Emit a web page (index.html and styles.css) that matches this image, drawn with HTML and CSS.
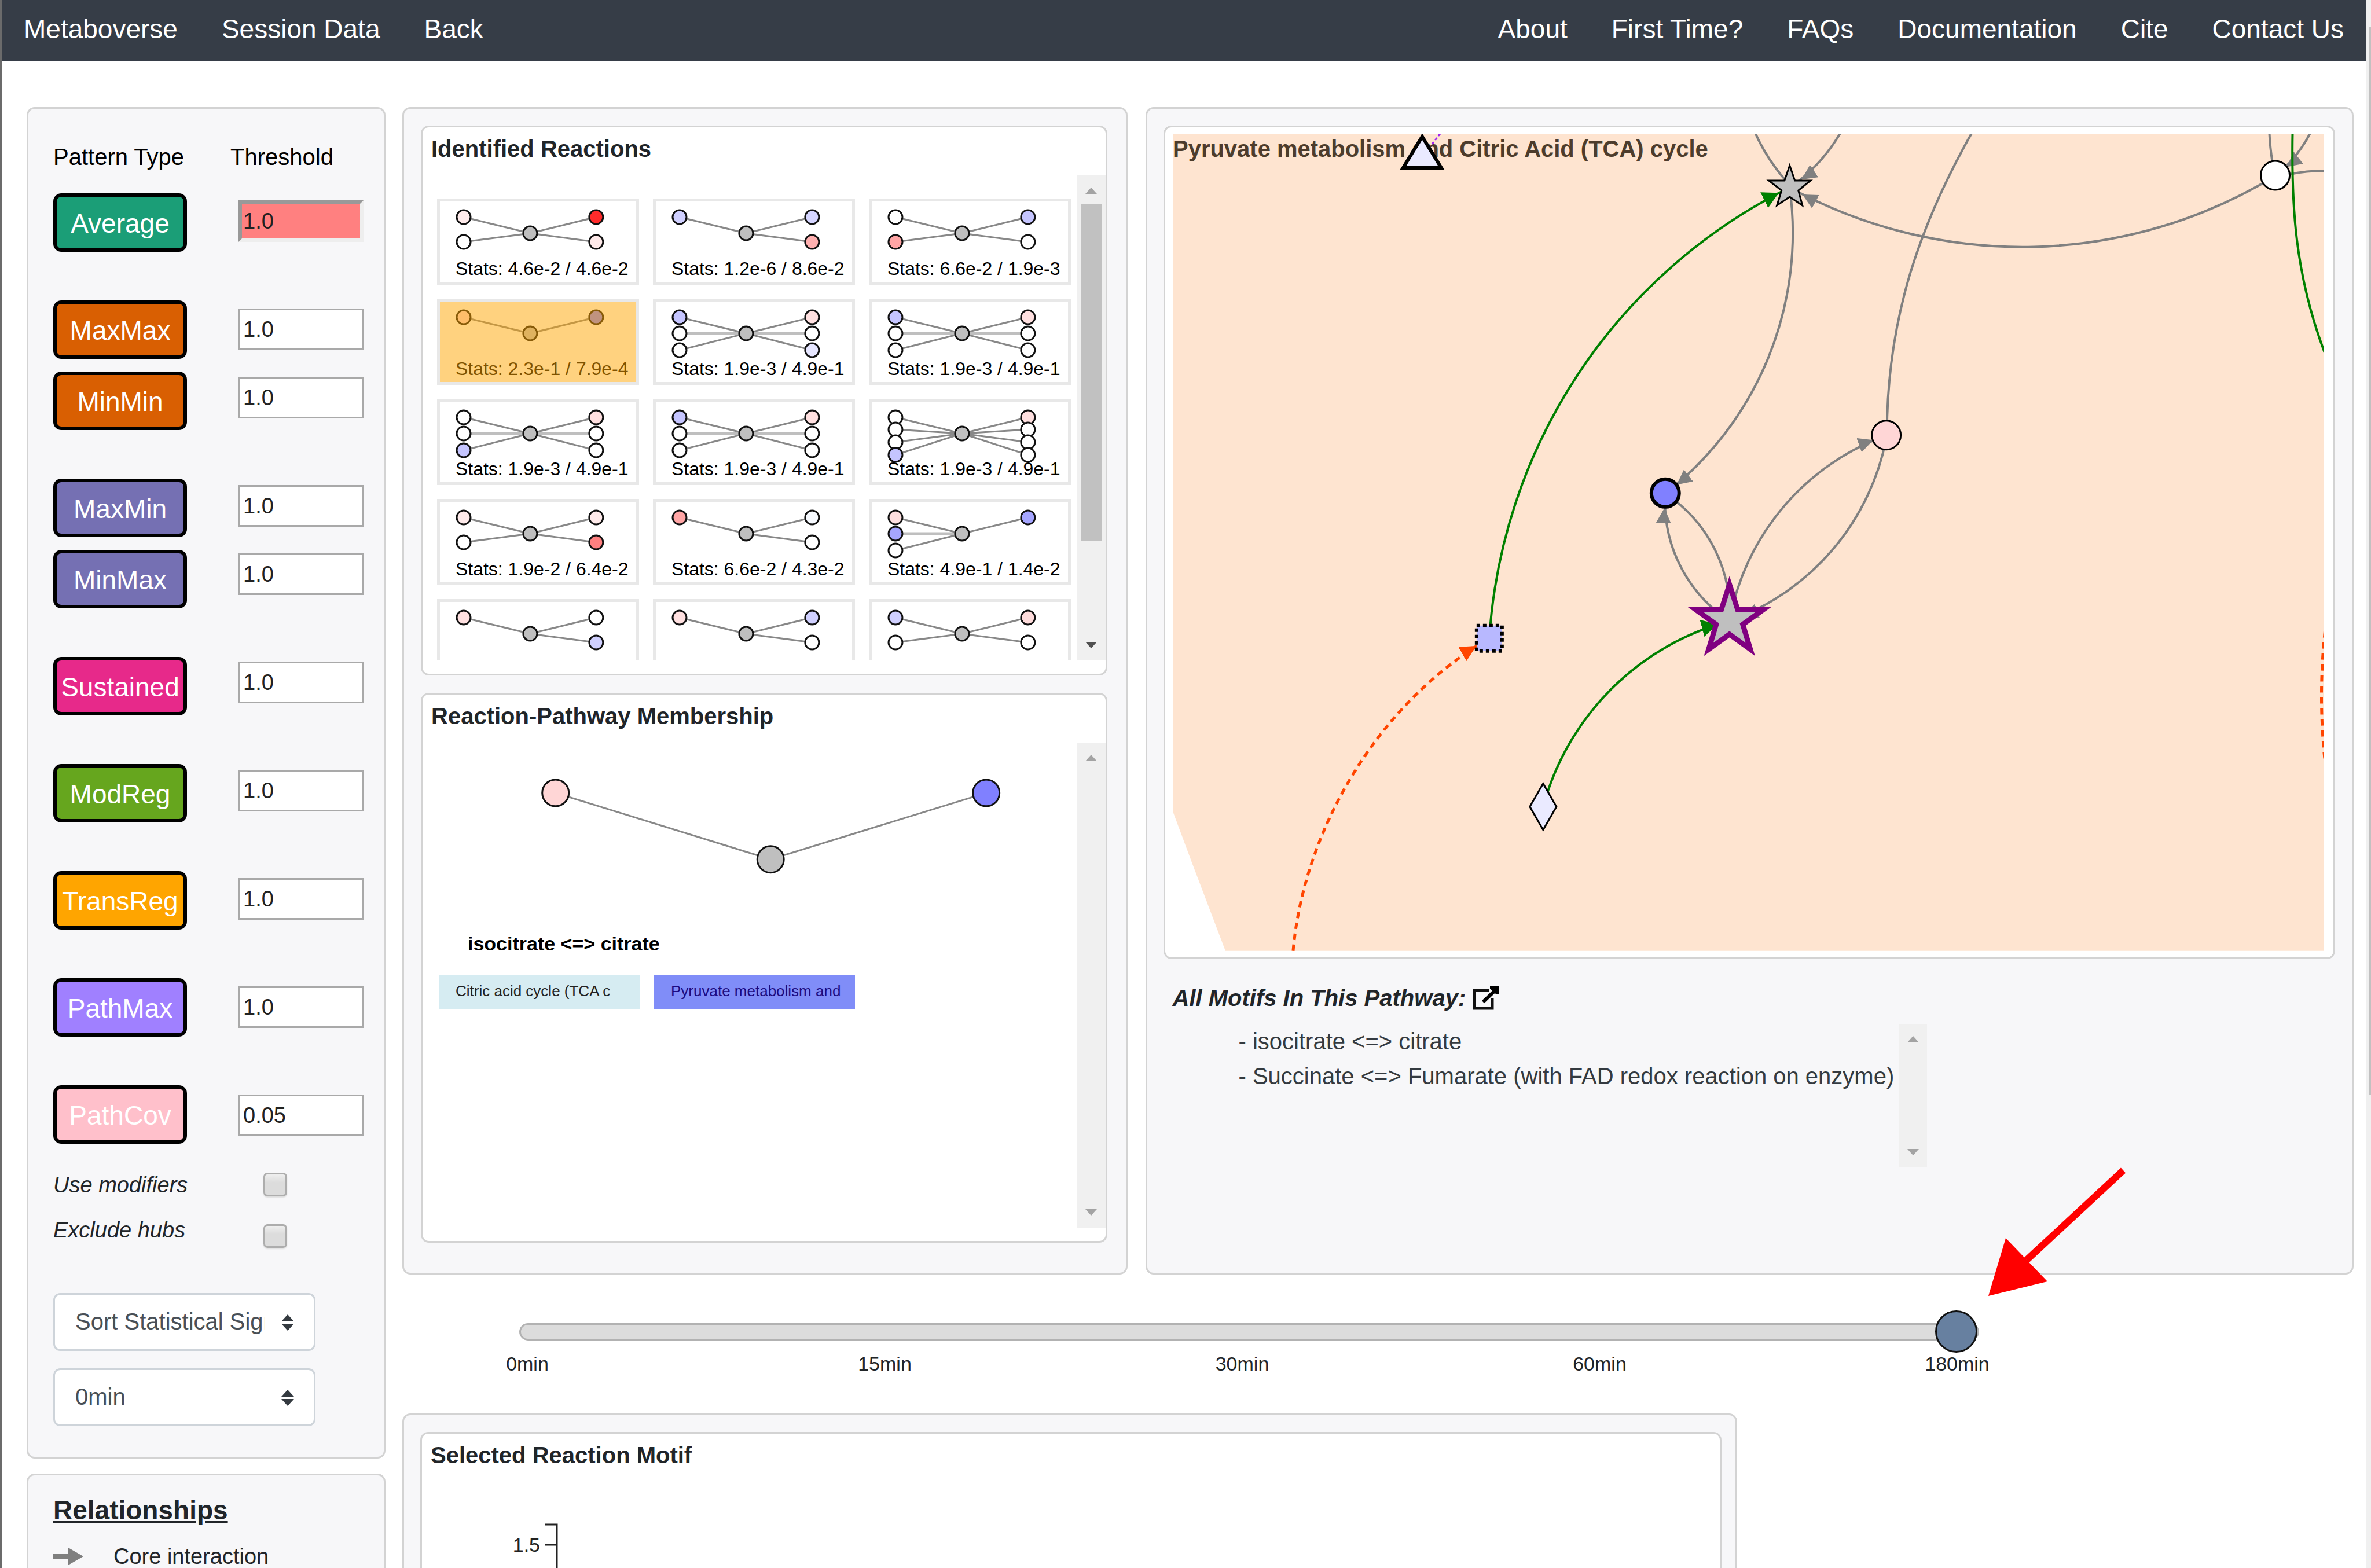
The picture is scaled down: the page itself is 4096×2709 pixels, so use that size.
FILE: index.html
```html
<!DOCTYPE html>
<html lang="en">
<head>
<meta charset="utf-8">
<title>Metaboverse</title>
<link rel="stylesheet" href="styles.css">
</head>
<body>
<svg class="defs" width="0" height="0" aria-hidden="true">
  <defs>
    <circle id="n" r="12" stroke="#111" stroke-width="3"/>
    <path id="l1" fill="none" d="M46 32L161 60"/>
    <path id="l2" fill="none" d="M46 32L161 60M46 75L161 60"/>
    <path id="l3" fill="none" d="M46 32L161 60L46 89"/>
    <path id="l4" fill="none" d="M46 32L161 60L46 53M46 75L161 60L46 97"/>
    <path id="r1" fill="none" d="M275 32L161 60"/>
    <path id="r2" fill="none" d="M275 32L161 60L275 75"/>
    <path id="r3" fill="none" d="M275 32L161 60L275 89"/>
    <path id="r4" fill="none" d="M275 32L161 60L275 53M275 75L161 60L275 97"/>
  </defs>
</svg>

<div class="page">
  <header class="topbar">
    <nav class="nav"><a href="#">Metaboverse</a><a href="#">Session Data</a><a href="#">Back</a></nav>
    <nav class="nav"><a href="#">About</a><a href="#">First Time?</a><a href="#">FAQs</a><a href="#">Documentation</a><a href="#">Cite</a><a href="#">Contact Us</a></nav>
  </header>

  <div class="layout">
    <aside class="sidebar">
      <section class="panel controls">
        <div class="columns">
          <div class="patterns">
            <span class="col-title">Pattern Type</span>
            <div class="group"><button class="pattern average">Average</button></div>
            <div class="group"><button class="pattern extreme">MaxMax</button><button class="pattern extreme">MinMin</button></div>
            <div class="group"><button class="pattern mixed">MaxMin</button><button class="pattern mixed">MinMax</button></div>
            <div class="group"><button class="pattern sustained">Sustained</button></div>
            <div class="group"><button class="pattern modreg">ModReg</button></div>
            <div class="group"><button class="pattern transreg">TransReg</button></div>
            <div class="group"><button class="pattern pathmax">PathMax</button></div>
            <div class="group"><button class="pattern pathcov">PathCov</button></div>
            <div class="check-labels">
              <label for="modifiers">Use modifiers</label>
              <label for="hubs">Exclude hubs</label>
            </div>
          </div>
          <div class="thresholds">
            <span class="col-title">Threshold</span>
            <div class="group"><input class="value active" type="text" aria-label="Average threshold" value="1.0"></div>
            <div class="group"><input class="value" type="text" aria-label="MaxMax threshold" value="1.0"><input class="value" type="text" aria-label="MinMin threshold" value="1.0"></div>
            <div class="group"><input class="value" type="text" aria-label="MaxMin threshold" value="1.0"><input class="value" type="text" aria-label="MinMax threshold" value="1.0"></div>
            <div class="group"><input class="value" type="text" aria-label="Sustained threshold" value="1.0"></div>
            <div class="group"><input class="value" type="text" aria-label="ModReg threshold" value="1.0"></div>
            <div class="group"><input class="value" type="text" aria-label="TransReg threshold" value="1.0"></div>
            <div class="group"><input class="value" type="text" aria-label="PathMax threshold" value="1.0"></div>
            <div class="group"><input class="value" type="text" aria-label="PathCov threshold" value="0.05"></div>
            <div class="checks">
              <input type="checkbox" id="modifiers">
              <input type="checkbox" id="hubs">
            </div>
          </div>
        </div>
        <div class="selects">
          <div class="select">
            <select aria-label="Sort order"><option>Sort Statistical Significance</option></select>
            <svg class="caret" viewBox="0 0 22 28" aria-hidden="true"><path d="M11 0L22 12H0zM11 28L0 16H22z"/></svg>
          </div>
          <div class="select">
            <select aria-label="Time point"><option>0min</option></select>
            <svg class="caret" viewBox="0 0 22 28" aria-hidden="true"><path d="M11 0L22 12H0zM11 28L0 16H22z"/></svg>
          </div>
        </div>
      </section>
      <section class="panel legend">
        <h2>Relationships</h2>
        <div class="legend-row">
          <svg class="legend-arrow" viewBox="0 0 52 30" aria-hidden="true"><path d="M0 11H26V0L52 15L26 30V19H0z"/></svg>
          <span>Core interaction</span>
        </div>
      </section>
    </aside>

    <main class="main">
      <div class="top">
        <section class="panel reactions">
          <div class="card">
            <h3>Identified Reactions</h3>
            <div class="scroller">
              <div class="tiles">
                <svg class="tile" viewBox="0 0 349 149"><use href="#l2"/><use href="#r2"/><use href="#n" x="161" y="60" class="hub"/><use href="#n" x="46" y="32" fill="#ffebeb"/><use href="#n" x="46" y="75" fill="#fff"/><use href="#n" x="275" y="32" fill="#ff2b2b"/><use href="#n" x="275" y="75" fill="#ffeaea"/><text x="32" y="132">Stats: 4.6e-2 / 4.6e-2</text></svg>
                <svg class="tile" viewBox="0 0 349 149"><use href="#l1"/><use href="#r2"/><use href="#n" x="161" y="60" class="hub"/><use href="#n" x="46" y="32" fill="#d0d0ff"/><use href="#n" x="275" y="32" fill="#d5d5ff"/><use href="#n" x="275" y="75" fill="#ffb0b0"/><text x="32" y="132">Stats: 1.2e-6 / 8.6e-2</text></svg>
                <svg class="tile" viewBox="0 0 349 149"><use href="#l2"/><use href="#r2"/><use href="#n" x="161" y="60" class="hub"/><use href="#n" x="46" y="32" fill="#fff"/><use href="#n" x="46" y="75" fill="#ffa5a5"/><use href="#n" x="275" y="32" fill="#c5c5ff"/><use href="#n" x="275" y="75" fill="#fff"/><text x="32" y="132">Stats: 6.6e-2 / 1.9e-3</text></svg>

                <svg class="tile" viewBox="0 0 349 149"><use href="#l1"/><use href="#r1"/><use href="#n" x="161" y="60" class="hub"/><use href="#n" x="46" y="32" fill="#ffd6d6"/><use href="#n" x="275" y="32" fill="#8080ff"/><text x="32" y="132">Stats: 2.3e-1 / 7.9e-4</text><rect class="chosen" x="3" y="3" width="344" height="144"/></svg>
                <svg class="tile" viewBox="0 0 349 149"><path class="mid" d="M46 60H275"/><use href="#l3"/><use href="#r3"/><use href="#n" x="161" y="60" class="hub"/><use href="#n" x="46" y="32" fill="#c5c5ff"/><use href="#n" x="46" y="60" fill="#fff"/><use href="#n" x="46" y="89" fill="#fff"/><use href="#n" x="275" y="32" fill="#ffe0e0"/><use href="#n" x="275" y="60" fill="#fff"/><use href="#n" x="275" y="89" fill="#e6e6ff"/><text x="32" y="132">Stats: 1.9e-3 / 4.9e-1</text></svg>
                <svg class="tile" viewBox="0 0 349 149"><path class="mid" d="M46 60H275"/><use href="#l3"/><use href="#r3"/><use href="#n" x="161" y="60" class="hub"/><use href="#n" x="46" y="32" fill="#c5c5ff"/><use href="#n" x="46" y="60" fill="#fff"/><use href="#n" x="46" y="89" fill="#fff"/><use href="#n" x="275" y="32" fill="#ffe0e0"/><use href="#n" x="275" y="60" fill="#fff"/><use href="#n" x="275" y="89" fill="#fff"/><text x="32" y="132">Stats: 1.9e-3 / 4.9e-1</text></svg>

                <svg class="tile" viewBox="0 0 349 149"><path class="mid" d="M46 60H275"/><use href="#l3"/><use href="#r3"/><use href="#n" x="161" y="60" class="hub"/><use href="#n" x="46" y="32" fill="#fff"/><use href="#n" x="46" y="60" fill="#fff"/><use href="#n" x="46" y="89" fill="#c5c5ff"/><use href="#n" x="275" y="32" fill="#ffe0e0"/><use href="#n" x="275" y="60" fill="#fff"/><use href="#n" x="275" y="89" fill="#fff"/><text x="32" y="132">Stats: 1.9e-3 / 4.9e-1</text></svg>
                <svg class="tile" viewBox="0 0 349 149"><path class="mid" d="M46 60H275"/><use href="#l3"/><use href="#r3"/><use href="#n" x="161" y="60" class="hub"/><use href="#n" x="46" y="32" fill="#c5c5ff"/><use href="#n" x="46" y="60" fill="#fff"/><use href="#n" x="46" y="89" fill="#fff"/><use href="#n" x="275" y="32" fill="#ffe0e0"/><use href="#n" x="275" y="60" fill="#fff"/><use href="#n" x="275" y="89" fill="#fff"/><text x="32" y="132">Stats: 1.9e-3 / 4.9e-1</text></svg>
                <svg class="tile" viewBox="0 0 349 149"><use href="#l4"/><use href="#r4"/><use href="#n" x="161" y="60" class="hub"/><use href="#n" x="46" y="32" fill="#fff"/><use href="#n" x="46" y="53" fill="#fff"/><use href="#n" x="46" y="75" fill="#fff"/><use href="#n" x="46" y="97" fill="#c5c5ff"/><use href="#n" x="275" y="32" fill="#ffe0e0"/><use href="#n" x="275" y="53" fill="#fff"/><use href="#n" x="275" y="75" fill="#fff"/><use href="#n" x="275" y="97" fill="#fff"/><text x="32" y="132">Stats: 1.9e-3 / 4.9e-1</text></svg>

                <svg class="tile" viewBox="0 0 349 149"><use href="#l2"/><use href="#r2"/><use href="#n" x="161" y="60" class="hub"/><use href="#n" x="46" y="32" fill="#ffebeb"/><use href="#n" x="46" y="75" fill="#fff"/><use href="#n" x="275" y="32" fill="#ffebeb"/><use href="#n" x="275" y="75" fill="#ff8080"/><text x="32" y="132">Stats: 1.9e-2 / 6.4e-2</text></svg>
                <svg class="tile" viewBox="0 0 349 149"><use href="#l1"/><use href="#r2"/><use href="#n" x="161" y="60" class="hub"/><use href="#n" x="46" y="32" fill="#ffa5a5"/><use href="#n" x="275" y="32" fill="#f7faff"/><use href="#n" x="275" y="75" fill="#fff"/><text x="32" y="132">Stats: 6.6e-2 / 4.3e-2</text></svg>
                <svg class="tile" viewBox="0 0 349 149"><path class="mid" d="M46 60H161"/><use href="#l3"/><use href="#r1"/><use href="#n" x="161" y="60" class="hub"/><use href="#n" x="46" y="32" fill="#ffe0e0"/><use href="#n" x="46" y="60" fill="#a5a5ff"/><use href="#n" x="46" y="89" fill="#fff"/><use href="#n" x="275" y="32" fill="#a5a5ff"/><text x="32" y="132">Stats: 4.9e-1 / 1.4e-2</text></svg>

                <svg class="tile" viewBox="0 0 349 149"><use href="#l1"/><use href="#r2"/><use href="#n" x="161" y="60" class="hub"/><use href="#n" x="46" y="32" fill="#ffe0e0"/><use href="#n" x="275" y="32" fill="#fff"/><use href="#n" x="275" y="75" fill="#d0d0ff"/></svg>
                <svg class="tile" viewBox="0 0 349 149"><use href="#l1"/><use href="#r2"/><use href="#n" x="161" y="60" class="hub"/><use href="#n" x="46" y="32" fill="#ffe0e0"/><use href="#n" x="275" y="32" fill="#d0d0ff"/><use href="#n" x="275" y="75" fill="#fff"/></svg>
                <svg class="tile" viewBox="0 0 349 149"><use href="#l2"/><use href="#r2"/><use href="#n" x="161" y="60" class="hub"/><use href="#n" x="46" y="32" fill="#d0d0ff"/><use href="#n" x="46" y="75" fill="#fff"/><use href="#n" x="275" y="32" fill="#ffdcdc"/><use href="#n" x="275" y="75" fill="#fff"/></svg>
              </div>
              <div class="scrollbar" aria-hidden="true"><i class="up"></i><b class="thumb"></b><i class="down enabled"></i></div>
            </div>
          </div>

          <div class="card">
            <h3>Reaction-Pathway Membership</h3>
            <div class="scroller">
              <div class="membership">
                <svg class="motif" viewBox="0 0 1132 324">
                  <path d="M230 87L602 202L975 87"/>
                  <circle cx="230" cy="87" r="23" fill="#ffd6d6"/><circle cx="975" cy="87" r="23" fill="#8080ff"/><circle cx="602" cy="202" r="23" fill="#bfbfbf"/>
                </svg>
                <p class="equation">isocitrate &lt;=&gt; citrate</p>
                <div class="tags"><button class="tag">Citric acid cycle (TCA c</button><button class="tag current">Pyruvate metabolism and</button></div>
              </div>
              <div class="scrollbar" aria-hidden="true"><i class="up"></i><i class="down"></i></div>
            </div>
          </div>
        </section>

        <section class="panel pathway">
          <div class="card graph">
            <svg class="network" viewBox="0 0 1990 1412">
              <defs>
                <marker id="a-gray" markerUnits="userSpaceOnUse" markerWidth="26" markerHeight="26" refX="51" refY="13" orient="auto"><path d="M0 0L26 13L0 26z" fill="#808080"/></marker>
                <marker id="a-green" markerUnits="userSpaceOnUse" markerWidth="28" markerHeight="30" refX="49" refY="15" orient="auto"><path d="M0 0L28 15L0 30z" fill="#008000"/></marker>
                <marker id="a-orange" markerUnits="userSpaceOnUse" markerWidth="28" markerHeight="28" refX="54" refY="14" orient="auto"><path d="M0 0L28 14L0 28z" fill="#ff4500"/></marker>
              </defs>
              <path fill="#fee4d0" d="M0 0H1990V1412H91L34 1262L0 1171z"/>
              <text x="0" y="40">Pyruvate metabolism and Citric Acid (TCA) cycle</text>
              <g fill="none" stroke="#808080" stroke-width="4">
                <path d="M1066 93A571 571 0 0 1 851 622" marker-end="url(#a-gray)"/>
                <path d="M851 622A246 246 0 0 1 962 842"/>
                <path d="M962 842A246 246 0 0 1 851 622" marker-end="url(#a-gray)"/>
                <path d="M962 842A421 421 0 0 1 1234 521" marker-end="url(#a-gray)"/>
                <path d="M1234 521A421 421 0 0 1 962 842" marker-end="url(#a-gray)"/>
                <path d="M1234 521C1234 330 1284 170 1380 0"/>
                <path d="M1905 73A839 839 0 0 1 1066 93" marker-end="url(#a-gray)"/>
                <path d="M1007 0Q1028 46 1062 84"/>
                <path d="M1153 0Q1118 58 1066 93" marker-end="url(#a-gray)"/>
                <path d="M1895 0Q1897 40 1905 73"/>
                <path d="M1965 0Q1942 44 1905 73" marker-end="url(#a-gray)"/>
                <path d="M1930 70Q1960 64 1990 64"/>
              </g>
              <g fill="none" stroke="#008000" stroke-width="4">
                <path d="M547 872A936 936 0 0 1 1066 93" marker-end="url(#a-green)"/>
                <path d="M640 1163A455 455 0 0 1 962 842" marker-end="url(#a-green)"/>
                <path d="M1935 0C1933 120 1938 240 1991 380"/>
              </g>
              <g fill="none" stroke="#ff4500" stroke-width="5" stroke-dasharray="11 8">
                <path d="M208 1412C225 1215 345 990 547 872" marker-end="url(#a-orange)"/>
                <path d="M1991 860Q1979 972 1991 1085"/>
              </g>
              <path d="M462 0L448 18" stroke="#a020f0" stroke-width="3" stroke-dasharray="5 4"/>
              <path d="M431 5L464 59H398z" fill="#eaeaff" stroke="#000" stroke-width="6"/>
              <path d="M1066 55L1075 81H1102L1081 98L1088 124L1066 109L1044 124L1052 98L1030 81H1057z" fill="#bfbfbf" stroke="#000" stroke-width="3"/>
              <path d="M962 779L976 822H1021L985 848L998 891L962 865L926 891L939 848L903 822H948z" fill="#bfbfbf" stroke="#800080" stroke-width="9" stroke-miterlimit="8"/>
              <circle cx="851" cy="621" r="24" fill="#8080ff" stroke="#000" stroke-width="6"/>
              <circle cx="1233" cy="521" r="25" fill="#ffd6d6" stroke="#000" stroke-width="3"/>
              <circle cx="1905" cy="72" r="25" fill="#fff" stroke="#000" stroke-width="3"/>
              <path d="M525 850H569V894H525z" fill="#b8b8ff" stroke="#000" stroke-width="6" stroke-dasharray="6 5"/>
              <path d="M640 1123L663 1163L640 1203L617 1163z" fill="#eaeaff" stroke="#000" stroke-width="3"/>
            </svg>
          </div>
          <div class="motifs">
            <h4>All Motifs In This Pathway:
              <a href="#" aria-label="Open in a new window"><svg class="external" viewBox="0 0 47 42"><path d="M29 8H3V39H34V21" fill="none" stroke="#111" stroke-width="5"/><path d="M18 28L38 9" stroke="#000" stroke-width="6"/><path d="M30 0H46V15L41 15L30 5z"/></svg></a>
            </h4>
            <div class="motif-list">
              <ul><li>- isocitrate &lt;=&gt; citrate</li><li>- Succinate &lt;=&gt; Fumarate (with FAD redox reaction on enzyme)</li></ul>
              <div class="scrollbar" aria-hidden="true"><i class="up"></i><i class="down"></i></div>
            </div>
          </div>
        </section>
      </div>

      <div class="timeline">
        <input type="range" min="0" max="4" step="1" value="4" aria-label="Time point">
        <div class="ticks"><span>0min</span><span>15min</span><span>30min</span><span>60min</span><span>180min</span></div>
        <svg class="pointer" viewBox="0 0 250 230" aria-hidden="true"><path d="M233 11L66 166" stroke="#f00" stroke-width="12"/><path d="M0 228L30 128L102 203z" fill="#f00"/></svg>
      </div>

      <section class="panel selected">
        <div class="card">
          <h3>Selected Reaction Motif</h3>
          <svg class="axis" viewBox="0 0 400 400" aria-hidden="true">
            <path d="M212 74H233V400M212 109H233" fill="none" stroke="#222" stroke-width="3"/>
            <text x="204" y="121" text-anchor="end">1.5</text>
          </svg>
        </div>
      </section>
    </main>
  </div>
</div>
<div class="page-scroll" aria-hidden="true"><div class="page-thumb"></div></div>
</body>
</html>
```
FILE: styles.css
```css
* { box-sizing: border-box; }

body {
  margin: 0;
  height: 100vh;
  display: flex;
  overflow: hidden;
  border-left: 3px solid #6b6b6b;
  background: #fff;
  color: #212529;
  font-family: "Liberation Sans", Arial, sans-serif;
  font-size: 40px;
}

h2, h3, h4, p, ul { margin: 0; padding: 0; }
button, input, select { font-family: inherit; margin: 0; }

.defs { position: absolute; }
.page { flex: 1; min-width: 0; height: 100vh; overflow: hidden; }

.page-scroll { width: 9px; background: #f0f0f0; padding: 46px 0 0 5px; }
.page-thumb { height: 69.3%; background: #c1c1c1; }

/* header */
.topbar {
  display: flex;
  justify-content: space-between;
  padding: 0 38px 6px;
  background: #363d47;
}
.nav { display: flex; gap: 76px; }
.nav a { color: #fff; text-decoration: none; font-size: 46px; line-height: 100px; }

.layout {
  display: grid;
  grid-template-columns: 620px minmax(0, 1fr);
  gap: 29px;
  padding: 79px 21px 0 43px;
}
.sidebar { display: flex; flex-direction: column; gap: 26px; }

.panel { background: #f7f7f9; border: 3px solid #d3d3d3; border-radius: 14px; }
.card { background: #fff; border: 3px solid #d3d3d3; border-radius: 14px; }

/* pattern controls */
.controls { padding: 60px 34px 53px 43px; }
.columns { display: flex; }
.patterns { width: 306px; }
.col-title { display: block; line-height: 46px; color: #000; }
.group { display: flex; flex-direction: column; }
.patterns .group { gap: 22px; margin-bottom: 84px; }
.patterns .col-title { margin-bottom: 40px; }
.patterns .group:nth-last-child(2) { margin-bottom: 48px; }
.pattern {
  width: 231px;
  height: 101px;
  padding: 2px 0 0;
  border: 6px solid #000;
  border-radius: 14px;
  color: #fff;
  font-size: 46px;
}
.average { background: #1b9e77; }
.extreme { background: #d95f02; }
.mixed { background: #7570b3; }
.sustained { background: #e7298a; }
.modreg { background: #66a61e; }
.transreg { background: #ffa500; }
.pathmax { background: #a080ff; }
.pathcov { background: #ffc0cb; }
.check-labels { display: flex; flex-direction: column; gap: 32px; font-size: 38px; font-style: italic; line-height: 46px; }

.thresholds .col-title { margin-bottom: 52px; }
.thresholds .group { gap: 46px; margin-bottom: 115px; padding-left: 14px; }
.thresholds .group:nth-last-child(2) { margin-bottom: 63px; }
.value {
  width: 216px;
  height: 72px;
  padding: 0 5px;
  border: 3px solid #a9a9a9;
  background: #fff;
  color: #222;
  font-size: 38px;
}
.value.active { padding: 0 2px; border: 6px solid; border-color: #999 #eee #eee #999; background: #ff8080; }
.checks { display: flex; flex-direction: column; gap: 48px; padding-left: 57px; }
.checks input {
  appearance: none;
  width: 41px;
  height: 41px;
  border: 3px solid #adadad;
  border-radius: 7px;
  background: linear-gradient(#eee, #dcdcdc 40%);
  box-shadow: 0 2px 2px #ddd;
}

.selects { display: flex; flex-direction: column; gap: 30px; margin-top: 78px; }
.select { position: relative; width: 453px; }
.select select {
  appearance: none;
  display: block;
  width: 100%;
  height: 100px;
  padding: 0 84px 2px 35px;
  border: 3px solid #ced4da;
  border-radius: 12px;
  background: #fff;
  color: #495057;
  font-size: 40px;
}
.caret { position: absolute; right: 37px; top: 37px; width: 22px; height: 28px; fill: #343a40; pointer-events: none; }

.legend { padding: 34px 43px; }
.legend h2 { font-size: 46px; line-height: 52px; text-decoration: underline; }
.legend-row { display: flex; align-items: center; gap: 52px; margin-top: 31px; font-size: 38px; line-height: 46px; }
.legend-arrow { width: 52px; height: 30px; fill: #7f7f7f; }

/* upper panels */
.top { display: grid; grid-template-columns: 3fr 5fr; gap: 31px; }
.reactions { display: flex; flex-direction: column; gap: 30px; padding: 29px 32px 52px 29px; }
.card h3 { padding: 14px 15px 23px; font-size: 40px; line-height: 46px; }
.reactions .card { padding-bottom: 23px; }
.scroller { display: flex; height: 838px; }
.tiles {
  flex: 1;
  min-width: 0;
  display: grid;
  grid-template-columns: repeat(3, 1fr);
  grid-auto-rows: max-content;
  gap: 24px;
  padding: 40px 11px 0 25px;
  overflow: hidden;
}
.tile { display: block; width: 100%; outline: 5px solid #e8e8e8; outline-offset: -5px; stroke: #888; stroke-width: 3; }
.tile text { font-size: 32px; fill: #000; stroke: none; }
.hub { fill: #bfbfbf; }
.mid { stroke: #bfbfbf; stroke-width: 5; }
.chosen { fill: #ffa500; fill-opacity: .5; stroke: none; }

.scrollbar {
  flex: none;
  width: 49px;
  display: flex;
  flex-direction: column;
  align-items: center;
  justify-content: space-between;
  padding: 21px 0;
  background: #f0f0f0;
}
.scrollbar i { border: 0 solid transparent; border-left-width: 10px; border-right-width: 10px; }
.scrollbar .up { border-bottom: 11px solid #a3a3a3; }
.scrollbar .down { border-top: 11px solid #a3a3a3; }
.scrollbar .enabled { border-top-color: #505050; }
.thumb { width: 37px; height: 582px; margin: 17px 0 auto; background: #c1c1c1; }

.membership { flex: 1; min-width: 0; }
.motif { display: block; width: 100%; fill: none; stroke: #888; stroke-width: 3; }
.motif circle { stroke: #111; }
.equation { padding-left: 78px; font-size: 34px; font-weight: bold; line-height: 46px; color: #000; }
.tags { display: flex; gap: 25px; margin-top: 32px; padding-left: 28px; }
.tag { width: 347px; height: 58px; padding: 0 29px 2px; border: 0; background: #d6ecf2; color: #222; font-size: 26px; text-align: left; white-space: nowrap; }
.tag.current { background: #808df8; color: #1c0a80; }

.pathway { padding: 29px 29px 0 28px; }
.graph { padding: 11px 16px 11px 13px; }
.network { display: block; width: 100%; }
.network text { font-size: 40px; font-weight: bold; fill: #4d3c2c; }
.motifs { padding: 44px 16px 0; }
.motifs h4 { display: flex; align-items: center; gap: 12px; font-size: 40px; font-style: italic; line-height: 46px; }
.motifs a { display: flex; }
.external { width: 47px; height: 42px; }
.motif-list { display: flex; width: max-content; height: 248px; margin-top: 22px; padding-left: 114px; }
.motif-list ul { list-style: none; padding-right: 8px; line-height: 60px; color: #343a40; }

/* time slider */
.timeline { position: relative; padding: 62px 625px 66px 156px; }
.timeline input { appearance: none; display: block; width: calc(100% - 68px); height: 73px; margin-left: 46px; background: none; }
.timeline input::-webkit-slider-runnable-track { height: 30px; border: 3px solid #b2b2b2; border-radius: 15px; background: #dcdcdc; }
.timeline input::-webkit-slider-thumb { appearance: none; width: 73px; height: 73px; margin-top: -25px; border: 3px solid #111; border-radius: 50%; background: #6780a0; }
.ticks { display: flex; justify-content: space-between; font-size: 34px; line-height: 39px; }
.ticks span { width: 120px; text-align: center; }
.pointer { position: absolute; right: 381px; top: -191px; width: 250px; height: 230px; }

.selected { width: 68.4%; padding: 29px 24px 29px 28px; }
.axis { display: block; width: 400px; height: 400px; }
.axis text { font-size: 34px; fill: #222; }
```
